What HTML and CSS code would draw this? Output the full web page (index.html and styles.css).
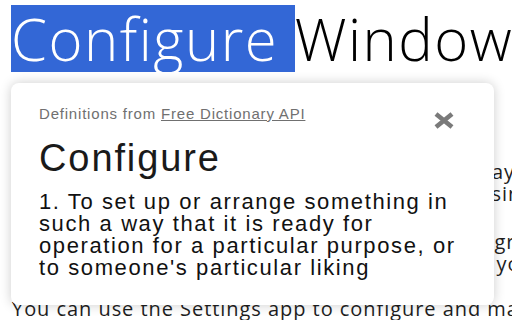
FILE: index.html
```html
<!DOCTYPE html>
<html lang="en">
<head>
<meta charset="utf-8">
<title>Configure Windows</title>
<link rel="stylesheet" href="styles.css">
</head>
<body>
<div class="page">
  <h1 class="title"><span class="sel">Configure&nbsp;</span>Windows settings</h1>
  <div class="article">
    <p class="para first">
      <span class="line">You can adjust settings to customize your display, sound and more,</span>
      <span class="line">and how Windows looks and feels for you, by using the Settings app.</span>
    </p>
    <p class="para second">
      <span class="line">Some settings on your PC might be set by your group policy or by the</span>
      <span class="line">policy, so you might not be able to adjust all of your settings.</span>
    </p>
    <p class="para third">
      <span class="line">You can use the Settings app to configure and manage Windows.</span>
    </p>
  </div>

  <div class="dict">
    <div class="dict-head">
      <div class="dict-source">Definitions from <a class="dict-link" href="#">Free Dictionary API</a></div>
      <svg class="dict-close" width="22" height="17" viewBox="0 0 22 17" aria-label="Close">
        <path d="M3 2 L19 15 M19 2 L3 15" stroke="#7a7a7a" stroke-width="4.6" stroke-linecap="butt" fill="none"/>
      </svg>
    </div>
    <div class="dict-word">Configure</div>
    <div class="dict-def">1. To set up or arrange something in such a way that it is ready for operation for a particular purpose, or to someone's particular liking</div>
  </div>
</div>
</body>
</html>
```
FILE: styles.css
```css
html, body {
  margin: 0;
  padding: 0;
  height: 100%;
  overflow: hidden;
  background: #ffffff;
}

.page {
  position: relative;
  padding: 5px 0 0 11px;
  font-family: "Open Sans", "Liberation Sans", sans-serif;
  color: #1e1e1e;
}

.title {
  margin: 0;
  font-weight: 300;
  font-size: 58px;
  line-height: 67px;
  letter-spacing: 1.5px;
  white-space: nowrap;
  color: #000000;
}

.sel {
  display: inline-block;
  background: #3367d6;
  color: #ffffff;
}

.article {
  padding-left: 1px;
  font-size: 20px;
  line-height: 22px;
  letter-spacing: 0.95px;
}

.para {
  margin: 0;
}

.para.first {
  margin-top: 89px;
}

.para.second {
  margin-top: 26px;
}

.para.third {
  margin-top: 23px;
}

.line {
  display: block;
  white-space: nowrap;
}

.dict {
  position: absolute;
  left: 11px;
  top: 83px;
  width: 483px;
  box-sizing: border-box;
  padding: 22px 28px 26px;
  background: #ffffff;
  border-radius: 8px;
  box-shadow: 0 0 12px rgba(0, 0, 0, 0.2);
  font-family: "Liberation Sans", Arial, sans-serif;
}

.dict-head {
  display: flex;
  justify-content: space-between;
  align-items: flex-start;
}

.dict-source {
  font-size: 15px;
  line-height: 17px;
  letter-spacing: 0.8px;
  color: #707070;
}

.dict-link {
  color: #707070;
  text-decoration: underline;
}

.dict-close {
  display: block;
  margin-top: 7px;
  margin-right: 11px;
}

.dict-word {
  margin-top: 7px;
  font-size: 38px;
  line-height: 44px;
  letter-spacing: 1.9px;
  color: #1a1a1a;
}

.dict-def {
  margin-top: 11px;
  font-size: 22px;
  line-height: 22px;
  letter-spacing: 1.6px;
  color: #111111;
}
```
